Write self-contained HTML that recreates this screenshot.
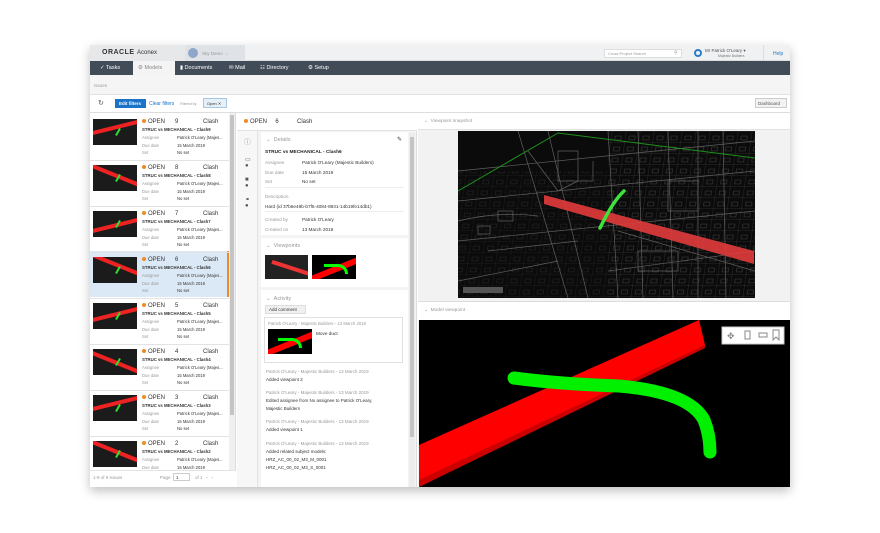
<!DOCTYPE html>
<html><head><meta charset="utf-8"><style>
*{margin:0;padding:0;box-sizing:border-box}
body{width:880px;height:533px;background:#fff;font-family:"Liberation Sans",sans-serif;position:relative;overflow:hidden;color:#333}
.a{position:absolute}
.app{left:90px;top:45px;width:700px;height:442px;background:#fff;box-shadow:0 4px 10px rgba(0,0,0,.25);overflow:hidden}
.t{font-size:5px;white-space:nowrap}
.item{position:absolute;left:0;width:139px;height:46px;border-bottom:1px solid #e3e3e3}
.item .th{position:absolute;left:3px;top:4px;width:44px;height:26px;background:#1b1b1b;overflow:hidden}
.dot{display:inline-block;width:4px;height:4px;border-radius:50%;background:#f08a24;margin-right:2px}
.gray{color:#999}
</style></head><body>
<div class="a app">
 <div class="a" style="left:0;top:0;width:700px;height:16px;background:#f0f1f2;border-bottom:1px solid #ddd"></div>
 <div class="a" style="left:0;top:0;width:95px;height:16px;background:#e6e8ea"></div>
 <div class="a t" style="left:12px;top:4px;font-size:7px;font-weight:bold;letter-spacing:.5px;color:#333">ORACLE <span style="font-weight:normal;font-size:6px;letter-spacing:0">Aconex</span></div>
 <div class="a" style="left:95px;top:0;width:60px;height:16px;background:#dfe3e7"></div>
 <div class="a" style="left:98px;top:3px;width:10px;height:10px;border-radius:50%;background:#8da6c9"></div>
 <div class="a t gray" style="left:112px;top:6px;font-size:4.5px">Sky Demo &nbsp;⌵</div>
 <div class="a" style="left:514px;top:4px;width:78px;height:9px;background:#fff;border:1px solid #ddd"></div>
 <div class="a t gray" style="left:518px;top:6px;font-size:4px">Cross Project Search</div>
 <div class="a t gray" style="left:584px;top:5px;font-size:5px">⚲</div>
 <div class="a" style="left:604px;top:4px;width:8px;height:8px;border-radius:50%;border:2px solid #2a7cc7"></div>
 <div class="a t" style="left:615px;top:3px;font-size:4.5px;color:#555">Mr Patrick O'Leary ▾</div>
 <div class="a t" style="left:628px;top:9px;font-size:3.5px;color:#777">Majestic Builders</div>
 <div class="a" style="left:673px;top:0;width:1px;height:16px;background:#ddd"></div>
 <div class="a t" style="left:683px;top:6px;font-size:5px;color:#2a7cc7">Help</div>
 <div class="a" style="left:0;top:16px;width:700px;height:14px;background:#424b58"></div>
 <div class="a" style="left:43px;top:16px;width:42px;height:14px;background:#f4f4f4"></div>
 <div class="a t" style="left:10px;top:20px;font-size:5.5px;color:#fff">✓ Tasks</div>
 <div class="a t" style="left:48px;top:20px;font-size:5.5px;color:#888">⚙ Models</div>
 <div class="a t" style="left:90px;top:20px;font-size:5.5px;color:#fff">▮ Documents</div>
 <div class="a t" style="left:139px;top:20px;font-size:5.5px;color:#fff">✉ Mail</div>
 <div class="a t" style="left:170px;top:20px;font-size:5.5px;color:#fff">☷ Directory</div>
 <div class="a t" style="left:218px;top:20px;font-size:5.5px;color:#fff">⚙ Setup</div>
 <div class="a" style="left:0;top:30px;width:700px;height:20px;background:#f5f5f5;border-bottom:1px solid #e2e2e2"></div>
 <div class="a t gray" style="left:4px;top:38px;font-size:4.5px">Issues</div>
 <div class="a t" style="left:8px;top:54px;font-size:7px;color:#555">↻</div>
 <div class="a" style="left:25px;top:54px;width:31px;height:9px;background:#1a73c9"></div>
 <div class="a t" style="left:29px;top:56px;font-size:4.5px;color:#fff;font-weight:bold">Edit filters</div>
 <div class="a t" style="left:59px;top:56px;font-size:5px;color:#1a73c9">Clear filters</div>
 <div class="a t gray" style="left:90px;top:57px;font-size:3.5px">Filtered by:</div>
 <div class="a" style="left:113px;top:53px;width:24px;height:10px;background:#e6f0f8;border:1px solid #a9c6e0"></div>
 <div class="a t" style="left:117px;top:56px;font-size:4px;color:#333">Open ✕</div>
 <div class="a" style="left:665px;top:53px;width:32px;height:10px;background:#f2f2f2;border:1px solid #ccc"></div>
 <div class="a t" style="left:668px;top:56px;font-size:4.5px;color:#555">Dashboard</div>
 <div class="a" style="left:0;top:67px;width:700px;height:1px;background:#ddd"></div>
 <div class="a" style="left:0;top:68px;width:146px;height:374px;background:#fff;border-right:1px solid #ddd">
  <div class="a" style="left:139px;top:0;width:6px;height:358px;background:#f0f0f0"></div>
  <div class="a" style="left:140px;top:2px;width:4px;height:300px;background:#c4c4c4"></div>
  <div class="a" style="left:0;top:138px;width:139px;height:46px;background:#dbe8f5;border-right:2px solid #f08a24"></div>
  <div id="list"></div>
  <div class="a" style="left:0;top:357px;width:146px;height:17px;background:#fff;border-top:1px solid #e3e3e3"></div>
  <div class="a t gray" style="left:3px;top:362px;font-size:4.5px">1-9 of 9 issues</div>
  <div class="a t gray" style="left:70px;top:362px;font-size:4.5px">Page</div>
  <div class="a" style="left:83px;top:360px;width:17px;height:8px;border:1px solid #ccc"></div>
  <div class="a t" style="left:86px;top:362px;font-size:4.5px">1</div>
  <div class="a t gray" style="left:105px;top:362px;font-size:4.5px">of 1 &nbsp; ‹ &nbsp; ›</div>
 </div>
 <div class="a" style="left:147px;top:68px;width:180px;height:374px;background:#f4f4f4;border-right:1px solid #ddd">
  <div class="a" style="left:0;top:0;width:180px;height:18px;background:#fff;border-bottom:1px solid #e2e2e2"></div>
  <div class="a t" style="left:7px;top:6px;font-size:6px"><span class="dot"></span>OPEN &nbsp;&nbsp;&nbsp; 6 &nbsp;&nbsp;&nbsp;&nbsp;&nbsp;&nbsp;&nbsp;&nbsp;&nbsp; Clash</div>
  <div class="a" style="left:0;top:18px;width:21px;height:356px;background:#f7f7f7;border-right:1px solid #e2e2e2"></div>
  <div class="a t gray" style="left:7px;top:24px;font-size:7px">ⓘ</div>
  <div class="a t" style="left:8px;top:44px;font-size:6px;color:#555;line-height:6px">▭<br>●</div>
  <div class="a t" style="left:8px;top:64px;font-size:6px;color:#555;line-height:6px">■<br>●</div>
  <div class="a t" style="left:8px;top:84px;font-size:6px;color:#555;line-height:6px">⚭<br>●</div>
  <div class="a" style="left:172px;top:20px;width:6px;height:354px;background:#ececec"></div>
  <div class="a" style="left:173px;top:24px;width:4px;height:300px;background:#c4c4c4"></div>
  <div class="a" style="left:24px;top:19px;width:147px;height:103px;background:#fff"></div>
  <div class="a t gray" style="left:29px;top:24px;font-size:5.5px">⌄ &nbsp;Details</div>
  <div class="a t" style="left:160px;top:23px;font-size:6px">✎</div>
  <div class="a t" style="left:28px;top:37px;font-size:4.8px;font-weight:bold;color:#222">STRUC vs MECHANICAL - Clash6</div>
  <div class="a t" style="left:28px;top:45px;font-size:4.7px;line-height:9.5px"><span class="gray">Assignee</span><br><span class="gray">Due date</span><br><span class="gray">Set</span></div>
  <div class="a t" style="left:65px;top:45px;font-size:4.7px;line-height:9.5px">Patrick O'Leary (Majestic Builders)<br>15 March 2019<br>No set</div>
  <div class="a" style="left:28px;top:74px;width:139px;height:1px;background:#eee"></div>
  <div class="a t" style="left:28px;top:79px;font-size:4.7px;line-height:9.5px"><span class="gray">Description</span><br>Hard (id 37b6e49b-b7f5-4084-8931-14b19fe14db1)</div>
  <div class="a" style="left:28px;top:98px;width:139px;height:1px;background:#eee"></div>
  <div class="a t" style="left:28px;top:102px;font-size:4.7px;line-height:9.5px"><span class="gray">Created by</span><br><span class="gray">Created on</span></div>
  <div class="a t" style="left:65px;top:102px;font-size:4.7px;line-height:9.5px">Patrick O'Leary<br>13 March 2019</div>
  <div class="a" style="left:24px;top:125px;width:147px;height:49px;background:#fff"></div>
  <div class="a t gray" style="left:29px;top:130px;font-size:5.5px">⌄ &nbsp;Viewpoints</div>
  <div class="a" style="left:28px;top:142px;width:43px;height:24px;background:#222;overflow:hidden"><div style="position:absolute;left:6px;top:11px;width:40px;height:4px;background:#e33;transform:rotate(18deg)"></div></div>
  <div class="a" style="left:75px;top:142px;width:44px;height:24px;background:#000;overflow:hidden"><div style="position:absolute;left:-4px;top:11px;width:56px;height:6px;background:#f00;transform:rotate(-22deg)"></div><div style="position:absolute;left:12px;top:9px;width:24px;height:10px;border-top:3px solid #0f0;border-right:3px solid #0f0;border-radius:0 12px 0 0"></div></div>
  <div class="a" style="left:24px;top:177px;width:147px;height:197px;background:#fff"></div>
  <div class="a t gray" style="left:29px;top:183px;font-size:5.5px">⌄ &nbsp;Activity</div>
  <div class="a" style="left:28px;top:192px;width:41px;height:9px;background:#f0f0f0;border:1px solid #ddd"></div>
  <div class="a t" style="left:32px;top:194px;font-size:4.5px">Add comment</div>
  <div class="a" style="left:27px;top:204px;width:139px;height:46px;border:1px solid #e0e0e0"></div>
  <div class="a t gray" style="left:31px;top:208px;font-size:4.3px">Patrick O'Leary - Majestic Builders - 13 March 2019</div>
  <div class="a" style="left:31px;top:216px;width:44px;height:25px;background:#000;overflow:hidden"><div style="position:absolute;left:-4px;top:11px;width:56px;height:6px;background:#f00;transform:rotate(-22deg)"></div><div style="position:absolute;left:10px;top:9px;width:24px;height:10px;border-top:3px solid #0f0;border-right:3px solid #0f0;border-radius:0 12px 0 0"></div></div>
  <div class="a t" style="left:79px;top:218px;font-size:4.7px">Move duct</div>
  <div class="a t" style="left:29px;top:255px;font-size:4.5px;line-height:8px"><span class="gray">Patrick O'Leary - Majestic Builders - 13 March 2019</span><br>Added viewpoint 2</div>
  <div class="a t" style="left:29px;top:276px;font-size:4.5px;line-height:8px"><span class="gray">Patrick O'Leary - Majestic Builders - 13 March 2019</span><br>Edited assignee from No assignee to Patrick O'Leary,<br>Majestic Builders</div>
  <div class="a t" style="left:29px;top:305px;font-size:4.5px;line-height:8px"><span class="gray">Patrick O'Leary - Majestic Builders - 13 March 2019</span><br>Added viewpoint 1</div>
  <div class="a t" style="left:29px;top:327px;font-size:4.5px;line-height:8px"><span class="gray">Patrick O'Leary - Majestic Builders - 13 March 2019</span><br>Added related subject models:<br>HRZ_AC_00_02_M3_M_0001<br>HRZ_AC_00_02_M3_S_0001</div>
 </div>
 <div class="a" style="left:328px;top:68px;width:372px;height:374px;background:#f2f2f2">
  <div class="a" style="left:0;top:0;width:372px;height:17px;background:#fff;border-bottom:1px solid #e2e2e2"></div>
  <div class="a t gray" style="left:6px;top:6px;font-size:4.8px">⌄ &nbsp;Viewpoint snapshot</div>
  <svg class="a" style="left:40px;top:18px" width="297" height="167" viewBox="0 0 297 167">
   <defs><pattern id="g" width="14" height="11" patternUnits="userSpaceOnUse" patternTransform="skewX(-8)">
    <path d="M0 0 H14 M0 0 V11 M4 5 h6 v4 h-6z" stroke="#555" stroke-width=".5" fill="none"/></pattern></defs>
   <rect width="297" height="167" fill="#0b0b0b"/>
   <rect x="150" width="147" height="167" fill="url(#g)" opacity=".8"/>
   <rect x="0" y="40" width="150" height="127" fill="url(#g)" opacity=".45"/>
   <g stroke="#606060" stroke-width=".7" fill="none">
    <path d="M0 40 L297 10 M0 70 L297 40 M0 110 L297 80 M60 0 L110 167 M90 0 L130 167 M150 0 L160 167 M180 0 L185 167 M210 0 L215 167 M240 0 L240 167 M265 0 L268 167 M30 120 L120 110 M70 20 L100 60 L120 50 M160 100 L297 140 M150 140 L297 120 M0 150 L100 130 M0 90 Q40 80 80 85"/>
    <path d="M100 20 h20 v30 h-20z M40 80 h15 v10 h-15z M210 50 h30 v30 h-30z M180 120 h40 v20 h-40z M20 95 h12 v8 h-12z M120 30 v20 h15 v-20"/>
   </g>
   <path d="M0 60 L100 2 M100 2 L297 27" stroke="#1d8f1d" stroke-width="1" fill="none"/>
   <polygon points="86,64 296,120 296,133 86,73" fill="#e23b3b" opacity=".9"/>
   <path d="M142 97 Q155 70 166 60" stroke="#3be33b" stroke-width="3.5" fill="none" stroke-linecap="round"/>
   <rect x="5" y="156" width="40" height="6" fill="#555"/>
  </svg>
  <div class="a" style="left:0;top:188px;width:372px;height:1px;background:#ddd"></div>
  <div class="a" style="left:0;top:189px;width:372px;height:18px;background:#fff"></div>
  <div class="a t gray" style="left:6px;top:195px;font-size:4.8px">⌄ &nbsp;Model viewpoint</div>
  <svg class="a" style="left:1px;top:207px" width="371" height="167" viewBox="0 0 371 167">
   <rect width="371" height="167" fill="#000"/>
   <polygon points="0,125 280,0 286,25 0,167" fill="#ff0000"/>
   <polygon points="0,160 286,25 286,28 0,167" fill="#c00"/>
   <path d="M95 58 Q140 64 200 66 Q270 72 285 100 Q291 115 291 132" stroke="#00f000" stroke-width="13" fill="none" stroke-linecap="round"/>
   <rect x="303" y="7" width="62" height="17" fill="#fff" stroke="#ccc"/>
   <text x="308" y="19" font-size="9" fill="#888" font-family="DejaVu Sans">✥</text>
   <rect x="326" y="11" width="5" height="8" fill="none" stroke="#888"/>
   <rect x="340" y="13" width="8" height="4" fill="none" stroke="#888"/>
   <path d="M354 10 v10 l3 -3 l3 3 v-10z" fill="none" stroke="#888"/>
  </svg>
 </div>
</div>
<script>
var h='',n=[9,8,7,6,5,4,3,2];
n.forEach(function(k,i){
 var t=i*46+2;
 h+='<div class="item" style="top:'+t+'px"><div class="th"><div style="position:absolute;left:-6px;top:'+(6+i%3*3)+'px;width:60px;height:4px;background:#e22;transform:rotate('+(i%2?22:-14)+'deg)"></div><div style="position:absolute;left:24px;top:9px;width:2px;height:8px;background:#3d3;transform:rotate(30deg)"></div></div>'+
 '<div class="a t" style="left:52px;top:4px;font-size:6px"><span class="dot"></span>OPEN &nbsp;&nbsp;&nbsp;&nbsp; '+k+'</div><div class="a t" style="left:113px;top:4px;font-size:6px">Clash</div>'+
 '<div class="a t" style="left:52px;top:12px;font-size:4.3px;font-weight:bold">STRUC vs MECHANICAL - Clash'+k+'</div>'+
 '<div class="a t" style="left:52px;top:19px;font-size:4.2px;line-height:7.5px"><span class="gray">Assignee</span><br><span class="gray">Due date</span><br><span class="gray">Set</span></div>'+
 '<div class="a t" style="left:87px;top:19px;font-size:4.2px;line-height:7.5px">Patrick O\'Leary (Majes...<br>15 March 2019<br>No set</div></div>';
});
document.getElementById('list').outerHTML=h;
</script>
</body></html>
